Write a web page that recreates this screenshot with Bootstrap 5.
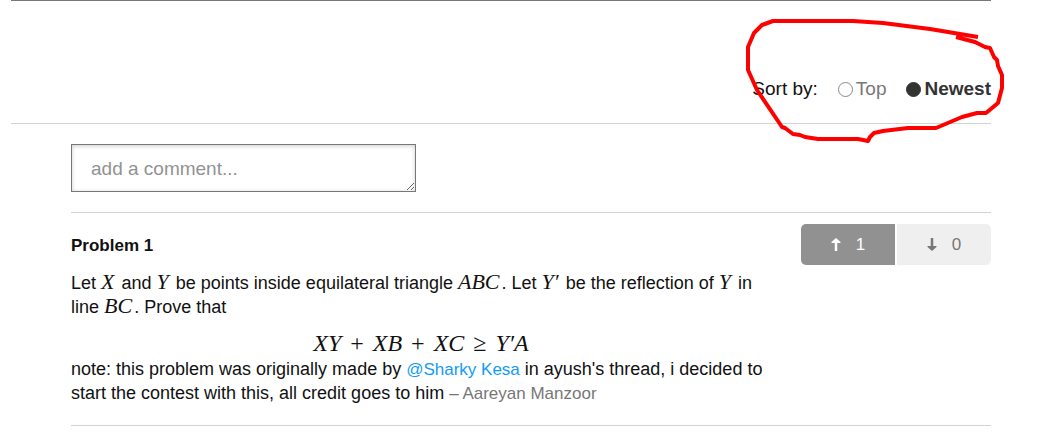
<!DOCTYPE html>
<html lang="en">
<head>
<meta charset="utf-8">
<meta name="viewport" content="width=device-width, initial-scale=1">
<title>Discussion</title>
<link href="https://cdn.jsdelivr.net/npm/bootstrap@5.3.0/dist/css/bootstrap.min.css" rel="stylesheet">
<style>
  body { font-family: "Liberation Sans", Arial, sans-serif; font-size: 18px; line-height: 24px; color: #111; background: #fff; }
  .discussion { margin: 0 46px 0 11px; border-top: 1px solid #777; }
  .sort-bar { height: 123px; padding-top: 76px; border-bottom: 1px solid #d3d3d3; font-size: 19px; color: #111; }
  .sort-option { gap: 3px; color: #777; }
  .sort-option input { appearance: none; width: 15px; height: 15px; margin: 0; border: 1px solid #888; border-radius: 50%; background: #fff; }
  .sort-option input:checked { background: #333; border-color: #333; }
  .sort-option:has(input:checked) { color: #333; font-weight: bold; }
  .scribble { top: 0; right: -46px; width: 307px; height: 150px; pointer-events: none; }
  .thread { margin-left: 60px; }
  .comment-form { padding: 20px 0; border-bottom: 1px solid #d3d3d3; }
  .comment-box { width: 345px; max-width: 100%; height: 48px; padding: 12px 19px 10px; border: 1px solid #777; border-radius: 0; font-size: 19px; line-height: 24px; box-shadow: inset 0 1px 4px rgba(0,0,0,.2); overflow: hidden; resize: both; }
  .comment-box::placeholder { color: #929292; opacity: 1; }
  .comment-item { padding: 11px 0 20px; gap: 30px; border-bottom: 1px solid #d3d3d3; }
  .comment-body { padding-top: 10px; }
  .comment-title { font-size: 17px; line-height: 24px; font-weight: bold; margin-bottom: 13px; }
  .formula { margin: 14px 0 0; }
  .tex { font-family: "Liberation Serif", "Times New Roman", serif; font-style: italic; font-size: 22px; line-height: 20px; margin-right: 2px; white-space: nowrap; }
  .formula .tex { font-size: 24px; margin: 0; }
  .tex .op { font-style: normal; margin: 0 9px; }
  .mention, .author { font-size: 17px; line-height: 20px; text-decoration: none; }
  .mention { color: #109cf8; }
  .author { color: #777; }
  .votes { gap: 2px; }
  .vote { width: 94px; height: 41px; border: 0; gap: 15px; font-size: 17px; color: #777; background: #efefef; border-radius: 0 5px 5px 0; }
  .vote.voted { color: #fff; background: #919191; border-radius: 5px 0 0 5px; }
</style>
</head>
<body>
<main class="discussion">
  <form class="sort-bar position-relative">
    <div class="d-flex justify-content-end align-items-center flex-nowrap">
      <span class="me-3 pe-1">Sort by:</span>
      <label class="sort-option d-flex align-items-center me-3 pe-1"><input type="radio" name="sort" value="top">Top</label>
      <label class="sort-option d-flex align-items-center"><input type="radio" name="sort" value="newest" checked>Newest</label>
    </div>
    <svg class="scribble position-absolute" viewBox="730 1 307 150" fill="none" stroke="#f00" stroke-width="4" stroke-linejoin="round" aria-hidden="true">
      <path d="M978 37 L930 29 L883 23 L853 21 H773 L762 25 L754 33 L748 47 V70 L757 90 L782 127 L785 128 L793 134 L800 135 L805 137 L818 139 H858 L868 141 L870 137 L874 133 L883 131 L908 128 H936 L962 117 L977 113 H986 L998 103 L1002 88 V75 L998 66 L997 60 L994 57 L990 48 L985 47 L975 42 L956 37"/>
    </svg>
  </form>

  <div class="thread">
    <form class="comment-form d-flex">
      <textarea class="comment-box d-block" rows="1" placeholder="add a comment..." aria-label="Add a comment"></textarea>
    </form>

    <article class="comment-item d-flex align-items-start">
      <div class="comment-body flex-grow-1">
        <h2 class="comment-title">Problem 1</h2>
        <p class="mb-0">Let <span class="tex">X</span> and <span class="tex">Y</span> be points inside equilateral triangle <span class="tex">ABC</span>. Let <span class="tex">Y′</span> be the reflection of <span class="tex">Y</span> in line <span class="tex">BC</span>. Prove that</p>
        <p class="formula text-center"><span class="tex">XY<span class="op">+</span>XB<span class="op">+</span>XC<span class="op">≥</span>Y′A</span></p>
        <p class="mb-0">note: this problem was originally made by <a class="mention" href="#">@Sharky Kesa</a> in ayush's thread, i decided to start the contest with this, all credit goes to him <a class="author" href="#">– Aareyan Manzoor</a></p>
      </div>
      <div class="votes d-flex flex-shrink-0">
        <button type="button" class="vote voted d-flex align-items-center justify-content-center" aria-label="Upvote, 1">
          <svg width="10" height="13" viewBox="0 0 10 13" fill="currentColor" aria-hidden="true"><path d="M5 0L9.500 4V5H6.250V13H3.750V5H.5V4Z"/></svg>1
        </button>
        <button type="button" class="vote d-flex align-items-center justify-content-center" aria-label="Downvote, 0">
          <svg width="10" height="13" viewBox="0 0 10 13" fill="currentColor" aria-hidden="true"><path d="M5 13L9.500 9V8H6.250V0H3.750V8H.5V9Z"/></svg>0
        </button>
      </div>
    </article>
  </div>
</main>
<script src="https://cdn.jsdelivr.net/npm/bootstrap@5.3.0/dist/js/bootstrap.bundle.min.js"></script>
</body>
</html>
